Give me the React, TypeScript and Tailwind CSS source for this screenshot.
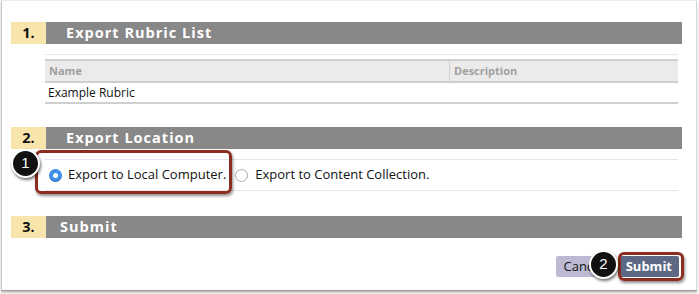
import React from "react";

const font = { fontFamily: '"Open Sans", "DejaVu Sans", sans-serif' };

function SectionHeader({ num, title, pad }: { num: string; title: string; pad: string }) {
  return (
    <div className="flex h-[22px] w-[671px]">
      <div className="flex w-[35px] items-center justify-center bg-[#f8e5ac] text-[14.5px] font-bold text-[#111]">
        {num}
      </div>
      <div
        className={`flex flex-1 items-center bg-[#888888] text-[14.5px] font-bold tracking-[0.07em] text-white ${pad}`}
      >
        {title}
      </div>
    </div>
  );
}

function Callout({ n, className }: { n: string; className: string }) {
  return (
    <div
      className={`absolute flex h-[29px] w-[29px] items-center justify-center rounded-full border-2 border-white bg-[#111] text-[15px] text-white shadow-[1px_2px_3px_rgba(0,0,0,0.55)] ${className}`}
      style={{ fontFamily: '"Liberation Sans", Arial, sans-serif' }}
    >
      {n}
    </div>
  );
}

export default function App() {
  return (
    <div className="relative h-[294px] w-[699px] overflow-hidden bg-white" style={font}>
      {/* Panel */}
      <div className="ml-[1px] h-[291px] w-[696px] border border-t-[#eee] border-l-[#c8c8c8] border-r-[#d8d8d8] border-b-[#999] shadow-[0_2px_2px_rgba(0,0,0,0.25)]">
        <div className="pl-[9px] pt-[21px]">
          <SectionHeader num="1." title="Export Rubric List" pad="pl-[20px]" />

          {/* Rubric table */}
          <div className="ml-[34px] mt-[10px] w-[633px] border-t border-[#e8e8e8] pt-[4px]">
            <div className="flex h-[24px] border-y-2 border-[#cfcfcf] bg-[#ebebeb] text-[11px] font-bold text-[#a0a0a0]">
              <div className="flex w-[405px] items-center border-r border-[#cfcfcf] pl-[4px]">Name</div>
              <div className="flex flex-1 items-center pl-[4px]">Description</div>
            </div>
            <div className="flex h-[21px] items-center border-b-2 border-[#cfcfcf] pl-[3px] text-[12px] text-[#111]">
              Example Rubric
            </div>
          </div>

          <div className="mt-[23px]">
            <SectionHeader num="2." title="Export Location" pad="pl-[20px]" />
          </div>

          {/* Location options */}
          <div className="ml-[34px] mt-[10px] flex h-[32px] w-[633px] items-center border-y border-[#e6e6e6] text-[13px] text-[#111]">
            <span className="ml-[4px] flex h-[13px] w-[13px] items-center justify-center rounded-full bg-[#3d8fe8] shadow-[inset_0_-1px_1px_rgba(0,0,0,0.2)]">
              <span className="h-[5px] w-[5px] rounded-full bg-white" />
            </span>
            <span className="ml-[6px]">Export to Local Computer.</span>
            <span className="ml-[9px] h-[13px] w-[13px] rounded-full border border-[#a9a9a9] bg-white" />
            <span className="ml-[7px]">Export to Content Collection.</span>
          </div>

          <div className="mt-[25px]">
            <SectionHeader num="3." title="Submit" pad="pl-[14px]" />
          </div>

          {/* Buttons */}
          <div className="mt-[18px] flex w-[671px] justify-end gap-[8px] pr-[3px]">
            <button className="h-[21px] rounded-[2px] bg-[#bdb9d3] px-[7px] text-[13px] text-[#111]">
              Cancel
            </button>
            <button className="h-[21px] rounded-[2px] bg-[#5d6884] px-[7px] text-[13px] font-bold text-white">
              Submit
            </button>
          </div>
        </div>
      </div>

      {/* Annotations */}
      <div className="absolute left-[35px] top-[150px] h-[44px] w-[197px] rounded-[6px] border-[3px] border-[#8c2d20] shadow-[1px_2px_3px_rgba(0,0,0,0.45)]" />
      <Callout n="1" className="left-[11px] top-[149px]" />
      <div className="absolute left-[618px] top-[252px] h-[29px] w-[66px] rounded-[6px] border-[3px] border-[#8c2d20] shadow-[1px_2px_3px_rgba(0,0,0,0.45)]" />
      <Callout n="2" className="left-[589px] top-[250px]" />
    </div>
  );
}
